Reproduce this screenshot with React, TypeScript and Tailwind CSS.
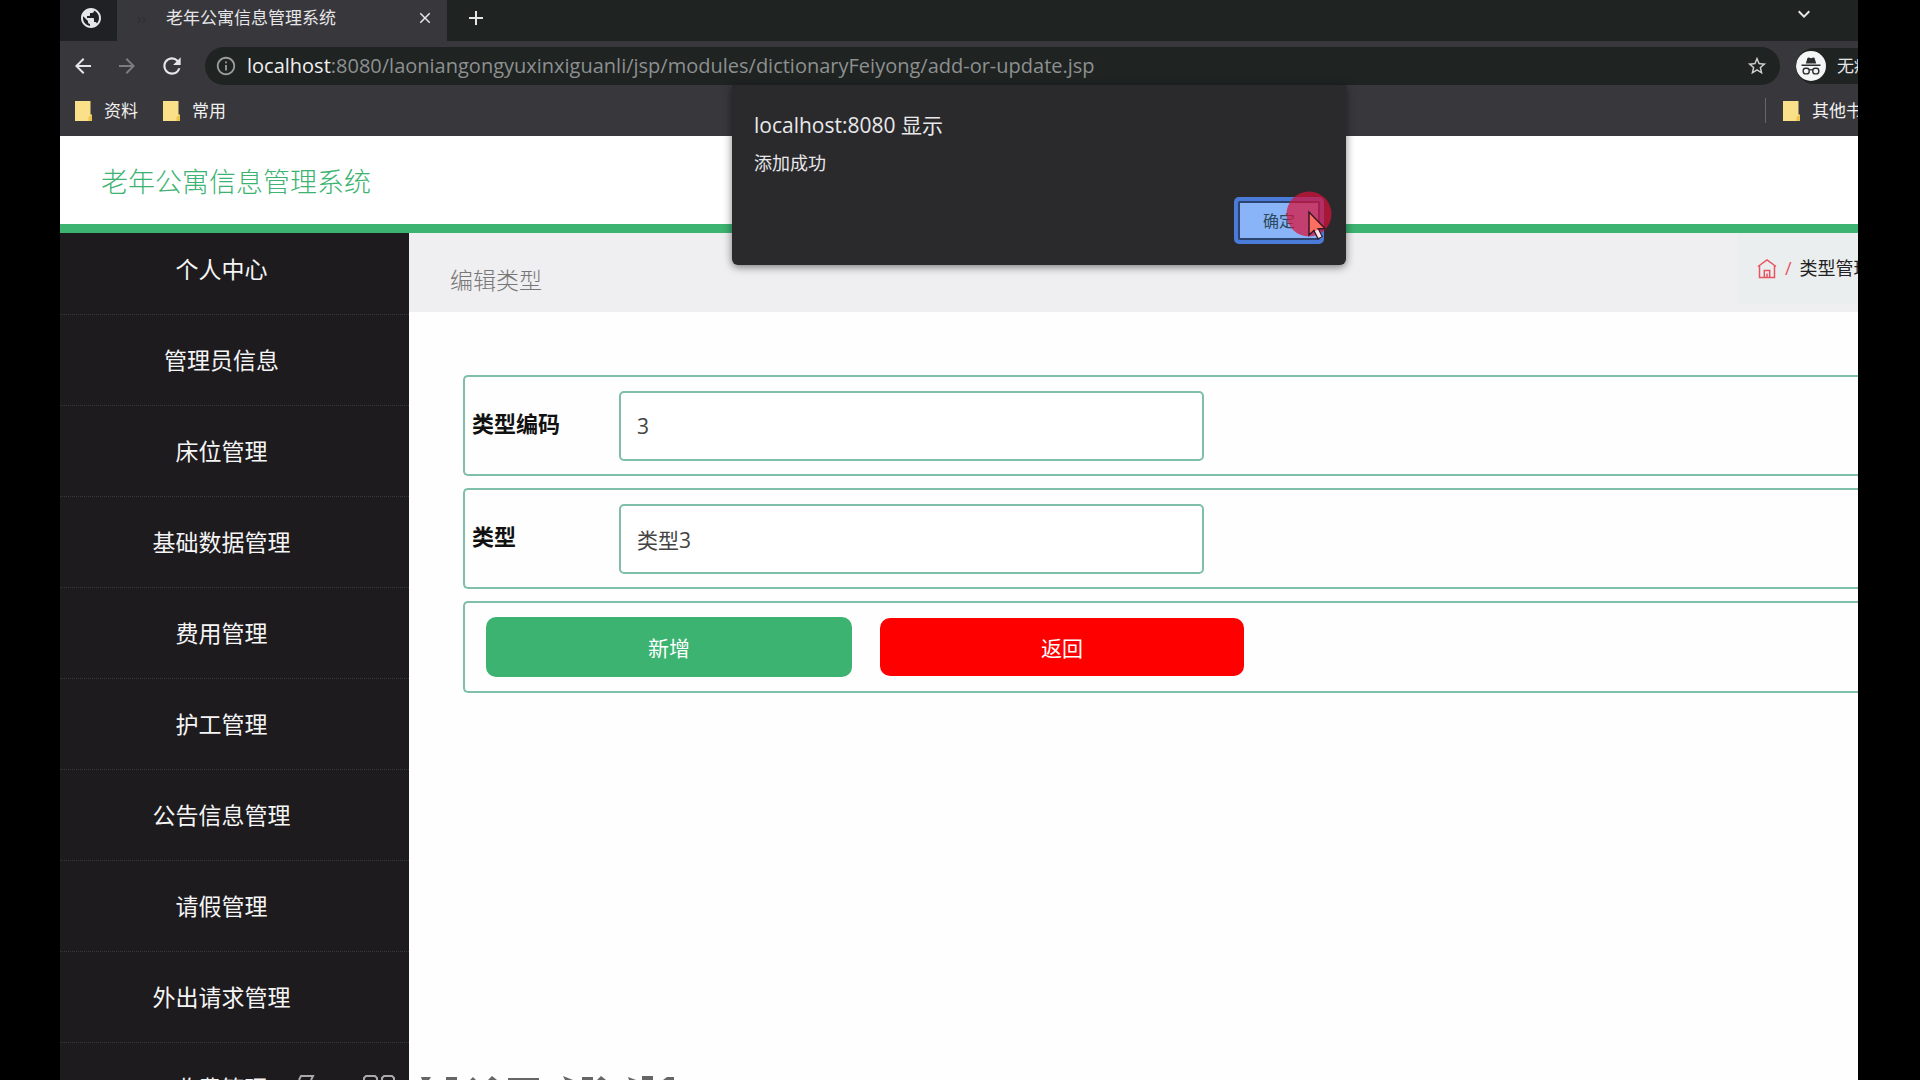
import {
  MdAdd,
  MdArrowBack,
  MdArrowForward,
  MdClose,
  MdExpandMore,
  MdInfoOutline,
  MdPublic,
  MdRefresh,
  MdStarBorder,
} from "react-icons/md";

const menuItems = [
  "个人中心",
  "管理员信息",
  "床位管理",
  "基础数据管理",
  "费用管理",
  "护工管理",
  "公告信息管理",
  "请假管理",
  "外出请求管理",
  "收费管理",
];

const fields = [
  { id: "codeIndex", label: "类型编码", value: "3" },
  { id: "indexName", label: "类型", value: "类型3" },
];

function FolderIcon() {
  return (
    <svg viewBox="0 0 17 20" className="h-5 w-[17px] shrink-0">
      <path d="M0 0h15.500v13.500H17V20H0z" fill="#fbe08a" />
      <path d="M13.500 16l3.500-2.500V20h-3.500z" fill="#eec44c" />
    </svg>
  );
}

function IncognitoIcon() {
  return (
    <svg viewBox="0 0 30 30" className="size-[30px] shrink-0">
      <circle cx="15" cy="15" r="15" fill="#f4f5f5" />
      <path
        d="M9.800 12.600l1.500-5.200c.2-.7.8-1 1.500-.8l2.200.6 2.200-.6c.7-.2 1.300.1 1.500.8l1.500 5.200z"
        fill="#2b2d2e"
      />
      <path d="M5.500 14.200h19" stroke="#2b2d2e" strokeWidth="1.400" />
      <g fill="none" stroke="#2b2d2e" strokeWidth="1.400">
        <rect x="7.200" y="17.300" width="6" height="5.600" rx="2.400" />
        <rect x="16.800" y="17.300" width="6" height="5.600" rx="2.400" />
        <path d="M13.200 19.300c1.100-.8 2.500-.8 3.600 0" />
      </g>
    </svg>
  );
}

function HomeIcon() {
  return (
    <svg viewBox="0 0 20 20" className="size-5 shrink-0" fill="none" stroke="#e8545f" strokeWidth="1.500">
      <path d="M1 7.500L10 1l9 6.500" />
      <path d="M2.500 6.800V18.500h15V6.800" />
      <path d="M7.300 18.500v-7h5.400v7M10 14.500v4" />
    </svg>
  );
}

function TabStrip() {
  return (
    <div className="flex h-[41px] bg-[#1f2322] text-[#e6e6e8]">
      <button aria-label="固定标签页" className="flex h-10 w-[57px] items-start justify-center rounded-br-lg bg-[#202124] pt-[6px] pl-1">
        <MdPublic className="size-6" />
      </button>
      <div className="flex h-[41px] w-[330px] items-center bg-[#38373b] pr-[13px] pb-[5px] pl-5">
        <span className="flex w-[29px] text-[15px] text-[#2e2e33]">››</span>
        <span className="flex-1 text-[17px]">老年公寓信息管理系统</span>
        <button aria-label="关闭">
          <MdClose className="size-[18px]" />
        </button>
      </div>
      <button aria-label="新标签页" className="ml-[17px] flex h-9 items-center">
        <MdAdd className="size-6" />
      </button>
      <button aria-label="搜索标签页" className="mr-[42px] ml-auto flex h-7 items-center">
        <MdExpandMore className="size-6" />
      </button>
    </div>
  );
}

function Toolbar() {
  return (
    <div className="flex h-[50px] items-center bg-[#38373b] text-[#e6e6e8]">
      <div className="flex w-[145px] items-center gap-5 pl-[11px]">
        <button aria-label="后退">
          <MdArrowBack className="size-6" />
        </button>
        <button aria-label="前进" className="text-[#7d7d80]">
          <MdArrowForward className="size-6" />
        </button>
        <button aria-label="刷新">
          <MdRefresh className="size-[26px]" />
        </button>
      </div>
      <div className="flex h-[38px] min-w-0 flex-1 items-center rounded-full bg-[#1f2322] pr-3 pl-[10px]">
        <MdInfoOutline className="size-[22px] shrink-0 text-[#9a9c9d]" />
        <p className="ml-[10px] flex-1 text-[20px] whitespace-nowrap text-[#8d9090]">
          <span className="text-[#f0f0f0]">localhost</span>
          :8080/laoniangongyuxinxiguanli/jsp/modules/dictionaryFeiyong/add-or-update.jsp
        </p>
        <button aria-label="收藏">
          <MdStarBorder className="size-[22px] text-[#d0d2d2]" />
        </button>
      </div>
      <button className="ml-4 flex h-9 w-[62px] items-center gap-[11px] overflow-hidden rounded-l-full bg-[#1f2322] text-[17px] whitespace-nowrap">
        <IncognitoIcon />
        <span>无痕模式</span>
      </button>
    </div>
  );
}

function Bookmarks() {
  return (
    <div className="flex h-[45px] items-center overflow-hidden bg-[#38373b] pb-[6px] pl-[15px] text-[17px] text-[#f0f0f0]">
      <a href="#" className="flex w-[88px] items-center gap-3">
        <FolderIcon />
        资料
      </a>
      <a href="#" className="flex items-center gap-3">
        <FolderIcon />
        常用
      </a>
      <div className="ml-auto flex w-[93px] items-center border-l border-[#66666a]">
        <a href="#" className="ml-[17px] flex items-center gap-3 whitespace-nowrap">
          <FolderIcon />
          其他书签
        </a>
      </div>
    </div>
  );
}

function Sidebar() {
  return (
    <nav className="w-[349px] shrink-0 bg-[#1e1b1f]">
      {/* first entry slides under the header line */}
      <ul className="-mt-[9px]">
        {menuItems.map((item) => (
          <li key={item} className="h-[91px] border-b border-dotted border-[#39383d]">
            <a href="#" className="flex h-full items-center justify-center pr-[26px] text-[23px] text-[#f5f5f5]">
              {item}
            </a>
          </li>
        ))}
      </ul>
    </nav>
  );
}

function EditForm() {
  return (
    <form className="flex flex-col gap-3 pt-[63px] pl-[54px]" onSubmit={(e) => e.preventDefault()}>
      {fields.map((field) => (
        <div
          key={field.id}
          className="flex h-[101px] items-center rounded-l-[5px] border-2 border-r-0 border-[#7fbfa9] pl-[7px]"
        >
          <label htmlFor={field.id} className="w-[147px] pb-1 text-[22px] font-bold text-[#111]">
            {field.label}
          </label>
          <input
            id={field.id}
            type="text"
            defaultValue={field.value}
            className="h-[70px] w-[585px] rounded-[5px] border-2 border-[#7fbfa9] bg-white px-4 text-[21px] text-[#444] outline-none"
          />
        </div>
      ))}
      <div className="flex h-[92px] items-center gap-7 rounded-l-[5px] border-2 border-r-0 border-[#7fbfa9] pl-[21px] text-[21px] text-white">
        <button type="submit" className="h-[60px] w-[366px] rounded-[10px] bg-[#3cb371] pt-1">
          新增
        </button>
        <button type="button" className="h-[58px] w-[364px] rounded-[10px] bg-[#ff0000] pt-1">
          返回
        </button>
      </div>
    </form>
  );
}

function AlertDialog() {
  return (
    <div
      role="alertdialog"
      aria-label="localhost:8080 显示"
      className="absolute top-[85px] left-[672px] h-[180px] w-[614px] rounded-b-md bg-[#2a2a2d] px-[22px] pt-[25px] text-[#e8e8ea] shadow-[0_2px_8px_rgba(0,0,0,0.5)]"
    >
      <h2 className="text-[21px] leading-[30px]">localhost:8080 显示</h2>
      <p className="mt-2 text-[18px] leading-[30px]">添加成功</p>
      <div className="mt-[19px] flex justify-end">
        <button className="h-[47px] w-[90px] rounded-[5px] border-4 border-[#4b7bd8] bg-[#8ab4f8] text-[16px] text-[#2b4a5c] inset-ring-2 inset-ring-[#2d4470]">
          确定
        </button>
      </div>
      {/* click highlight and pointer */}
      <svg viewBox="0 0 48 56" className="absolute top-[105px] left-[553px] h-14 w-12">
        <circle cx="24" cy="24" r="22.500" fill="#d8123c" fillOpacity="0.720" />
        <path
          d="M24 22v23l5-4.500 4 8 4-2-4-7.500 7-.5z"
          fill="#ff6f61"
          stroke="#3a1626"
          strokeWidth="1.500"
        />
        <path d="M30 41l3.500 7 3-1.500-3.500-7z" fill="#f4e6ee" />
      </svg>
    </div>
  );
}

// Tops of the caption that runs past the lower edge
function CaptionEdge() {
  return (
    <svg viewBox="0 0 390 6" className="absolute bottom-0 left-[235px] h-[6px] w-[390px]" fill="none">
      <g stroke="#aaa9ab" strokeWidth="2">
        <path d="M4 6l2-4h12l-2 4M69 6V4l2-2h9l2 2v2M87 6V4l2-2h8l2 2v2" />
      </g>
      <g fill="#666">
        <path d="M126 3h10l-2 3h-7zM151 3h11v3h-11zM175 6l3-3 3 3zM193 6l4-4 5 4zM213 4h31v2h-31z" />
        <path d="M268 2l10 4h-8zM287 3h11v3h-11zM302 6l4-4 5 4zM333 3l8 3h-7zM347 2h11v4h-11zM368 6l4-3h7v3z" />
      </g>
    </svg>
  );
}

export default function App() {
  return (
    <div className="h-screen overflow-hidden bg-black pr-[62px] pl-[60px] font-['Open_Sans','Noto_Sans_CJK_SC',sans-serif]">
      <div className="relative flex h-full flex-col overflow-hidden bg-white">
        <TabStrip />
        <Toolbar />
        <Bookmarks />
        <header className="relative flex h-[97px] shrink-0 items-center border-b-[9px] border-[#3cb371] bg-white pt-1 pl-[41px]">
          <h1 className="text-[27px] font-light text-[#3cb371]">老年公寓信息管理系统</h1>
        </header>
        <div className="flex min-h-0 flex-1">
          <Sidebar />
          <main className="min-w-0 flex-1 bg-[#fefefe]">
            <div className="flex h-[79px] justify-between bg-[#efeef0]">
              <h2 className="pt-[30px] pl-[41px] text-[23px] leading-[35px] font-light text-[#777]">编辑类型</h2>
              <div className="flex h-[71px] w-[121px] items-center gap-2 overflow-hidden bg-[#ebeeee] pl-5 text-[18px] whitespace-nowrap">
                <a href="#" aria-label="首页">
                  <HomeIcon />
                </a>
                <span className="text-[#e8545f]">/</span>
                <a href="#" className="text-[#222]">
                  类型管理
                </a>
              </div>
            </div>
            <EditForm />
          </main>
        </div>
        <AlertDialog />
        <CaptionEdge />
      </div>
    </div>
  );
}
